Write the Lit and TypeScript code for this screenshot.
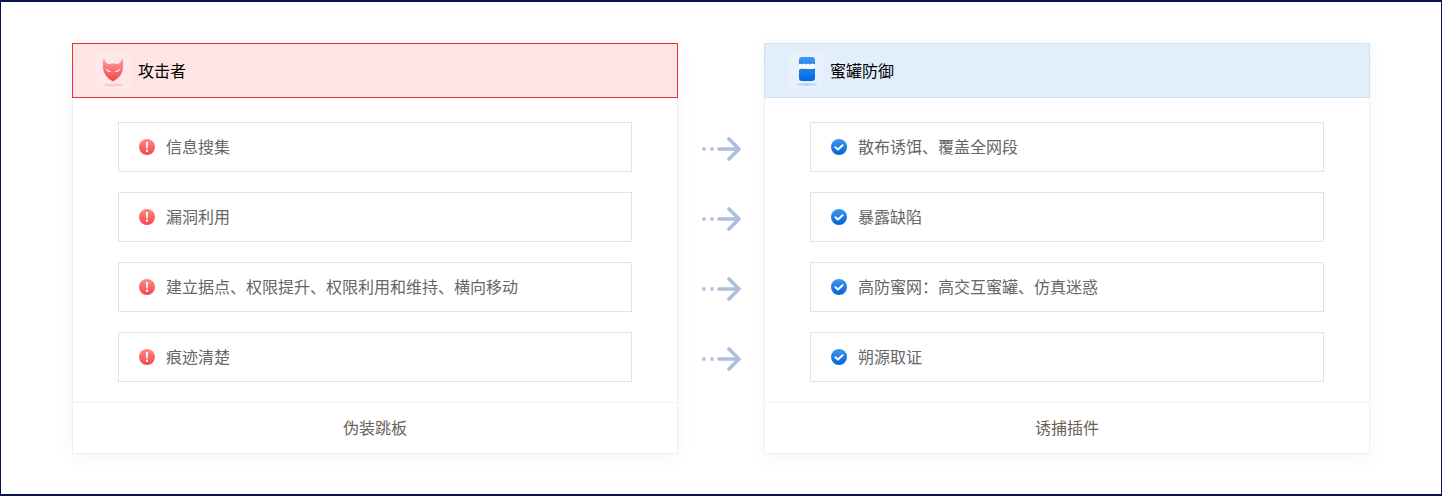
import { LitElement, html, css, svg } from "lit";
import { customElement } from "lit/decorators.js";

const warn = html`<svg class="ico" viewBox="0 0 16 16"><defs><linearGradient id="w" x1="0" y1="0" x2="0" y2="1"><stop offset="0" stop-color="#ff8a86"/><stop offset="1" stop-color="#f9444a"/></linearGradient></defs><circle cx="8" cy="8" r="8" fill="url(#w)"/><path d="M6.9 3h2.2l-.35 6.6H7.25z" fill="#fff"/><circle cx="8" cy="11.8" r="1.2" fill="#fff"/></svg>`;
const check = html`<svg class="ico" viewBox="0 0 16 16"><defs><linearGradient id="c" x1="0" y1="0" x2="0" y2="1"><stop offset="0" stop-color="#3f98ee"/><stop offset="1" stop-color="#0062d8"/></linearGradient></defs><circle cx="8" cy="8" r="8" fill="url(#c)"/><path d="M4.4 8.3l2.5 2.3 4.7-4.4" fill="none" stroke="#fff" stroke-width="2" stroke-linecap="round" stroke-linejoin="round"/></svg>`;
const devil = html`<svg class="logo" viewBox="0 0 34 36"><defs><linearGradient id="d" x1="0" y1="0" x2="0" y2="1"><stop offset="0" stop-color="#ffa19e"/><stop offset="1" stop-color="#f5434a"/></linearGradient></defs><rect width="34" height="36" fill="#ffe8e8"/><path d="M8 5 C8.6 8.4 10 10.2 12.4 11 C15.2 10.2 18.8 10.2 21.6 11 C24 10.2 25.4 8.4 26 5 C27.2 7.6 27.6 10 27 12.6 C27.4 19.6 23.6 25.4 17 28.4 C10.4 25.4 6.6 19.6 7 12.6 C6.4 10 6.8 7.6 8 5z" fill="url(#d)"/><path d="M9.4 15.4 L15.2 18.4 C13.4 19.8 10.8 18.6 9.4 15.4z M24.6 15.4 L18.8 18.4 C20.6 19.8 23.2 18.6 24.6 15.4z" fill="#ffe6e4"/><ellipse cx="17" cy="32" rx="10.5" ry="1.5" fill="#ffc9c9"/></svg>`;
const jar = html`<svg class="logo" viewBox="0 0 35 36"><defs><linearGradient id="j" x1="0" y1="0" x2="0" y2="1"><stop offset="0" stop-color="#3f98ee"/><stop offset="1" stop-color="#0066e4"/></linearGradient></defs><rect width="35" height="36" fill="#e8f1fb"/><rect x="11" y="4" width="16" height="24" rx="3" fill="url(#j)"/><path d="M11 11.6 L13 10.8 L14.6 11.6 L16.2 10.4 L18 11.6 L20 10.4 L22 11.6 L24 10.6 L27 11.6 V15.4 C22 17.2 16 14.8 11 16.4z" fill="#fff"/><ellipse cx="19" cy="31.5" rx="10.5" ry="1.5" fill="#b8d8f8"/></svg>`;

const arrowSvg = svg`<circle cx="3" cy="12" r="1.9" fill="#b4c4dc"/><circle cx="11" cy="12" r="1.9" fill="#b4c4dc"/><path d="M18 12H37.5M28 2l10 10-10 10" fill="none" stroke="#adbfda" stroke-width="3.6" stroke-linecap="round" stroke-linejoin="round"/>`;

@customElement("app-root")
export class AppRoot extends LitElement {
  static styles = css`
    :host {
      display: block;
      width: 1442px;
      height: 496px;
      box-sizing: border-box;
      border: 2px solid #0b1250;
      border-left-width: 1px;
      border-right-width: 1px;
      background: #fff;
      font-family: "Noto Sans CJK SC", "Noto Sans", sans-serif;
      font-size: 16px;
      color: #666;
    }
    .wrap {
      display: flex;
      padding: 41px 71px 0;
    }
    .card {
      width: 606px;
      height: 411px;
      box-sizing: border-box;
      display: flex;
      flex-direction: column;
      background: #fff;
      border: 1px solid #eef0f4;
      border-top: none;
      box-shadow: 0 4px 16px rgba(30, 50, 90, 0.05);
    }
    .head {
      flex: none;
      height: 55px;
      margin: 0 -1px;
      box-sizing: border-box;
      display: flex;
      align-items: center;
      padding-left: 23px;
      gap: 8px;
      color: #000;
    }
    .head span,
    .item span,
    .foot span {
      margin-top: -2px;
    }
    .red { background: #ffe4e4; border: 1px solid #ee2c36; }
    .blue { background: #e2eefb; border: 1px solid #d2e0f3; }
    .logo { width: 34px; height: 36px; display: block; }
    .blue .logo { width: 35px; margin-right: -1px; }
    .list {
      flex: 1;
      display: flex;
      flex-direction: column;
      gap: 20px;
      padding: 24px 45px 20px;
    }
    .item {
      flex: none;
      height: 50px;
      box-sizing: border-box;
      border: 1px solid #dde3ec;
      display: flex;
      align-items: center;
      padding-left: 20px;
      gap: 11px;
    }
    .ico { width: 16px; height: 16px; display: block; flex: none; }
    .foot {
      flex: none;
      height: 50px;
      border-top: 1px solid #eef0f4;
      display: flex;
      align-items: center;
      justify-content: center;
      color: #6b6258;
    }
    .arrows {
      width: 86px;
      display: flex;
      flex-direction: column;
      align-items: center;
      gap: 46px;
      padding-top: 94px;
      box-sizing: border-box;
    }
    .arrow { width: 40px; height: 24px; display: block; }
  `;

  private renderCard(cls: string, logo: unknown, title: string, icon: unknown, items: string[], foot: string) {
    return html`<section class="card">
      <header class="head ${cls}">${logo}<span>${title}</span></header>
      <div class="list">
        ${items.map((t) => html`<div class="item">${icon}<span>${t}</span></div>`)}
      </div>
      <footer class="foot"><span>${foot}</span></footer>
    </section>`;
  }

  render() {
    return html`<div class="wrap">
      ${this.renderCard("red", devil, "攻击者", warn,
        ["信息搜集", "漏洞利用", "建立据点、权限提升、权限利用和维持、横向移动", "痕迹清楚"], "伪装跳板")}
      <div class="arrows">
        ${[0, 1, 2, 3].map(() => html`<svg class="arrow" viewBox="0 0 40 24">${arrowSvg}</svg>`)}
      </div>
      ${this.renderCard("blue", jar, "蜜罐防御", check,
        ["散布诱饵、覆盖全网段", "暴露缺陷", "高防蜜网：高交互蜜罐、仿真迷惑", "朔源取证"], "诱捕插件")}
    </div>`;
  }
}
